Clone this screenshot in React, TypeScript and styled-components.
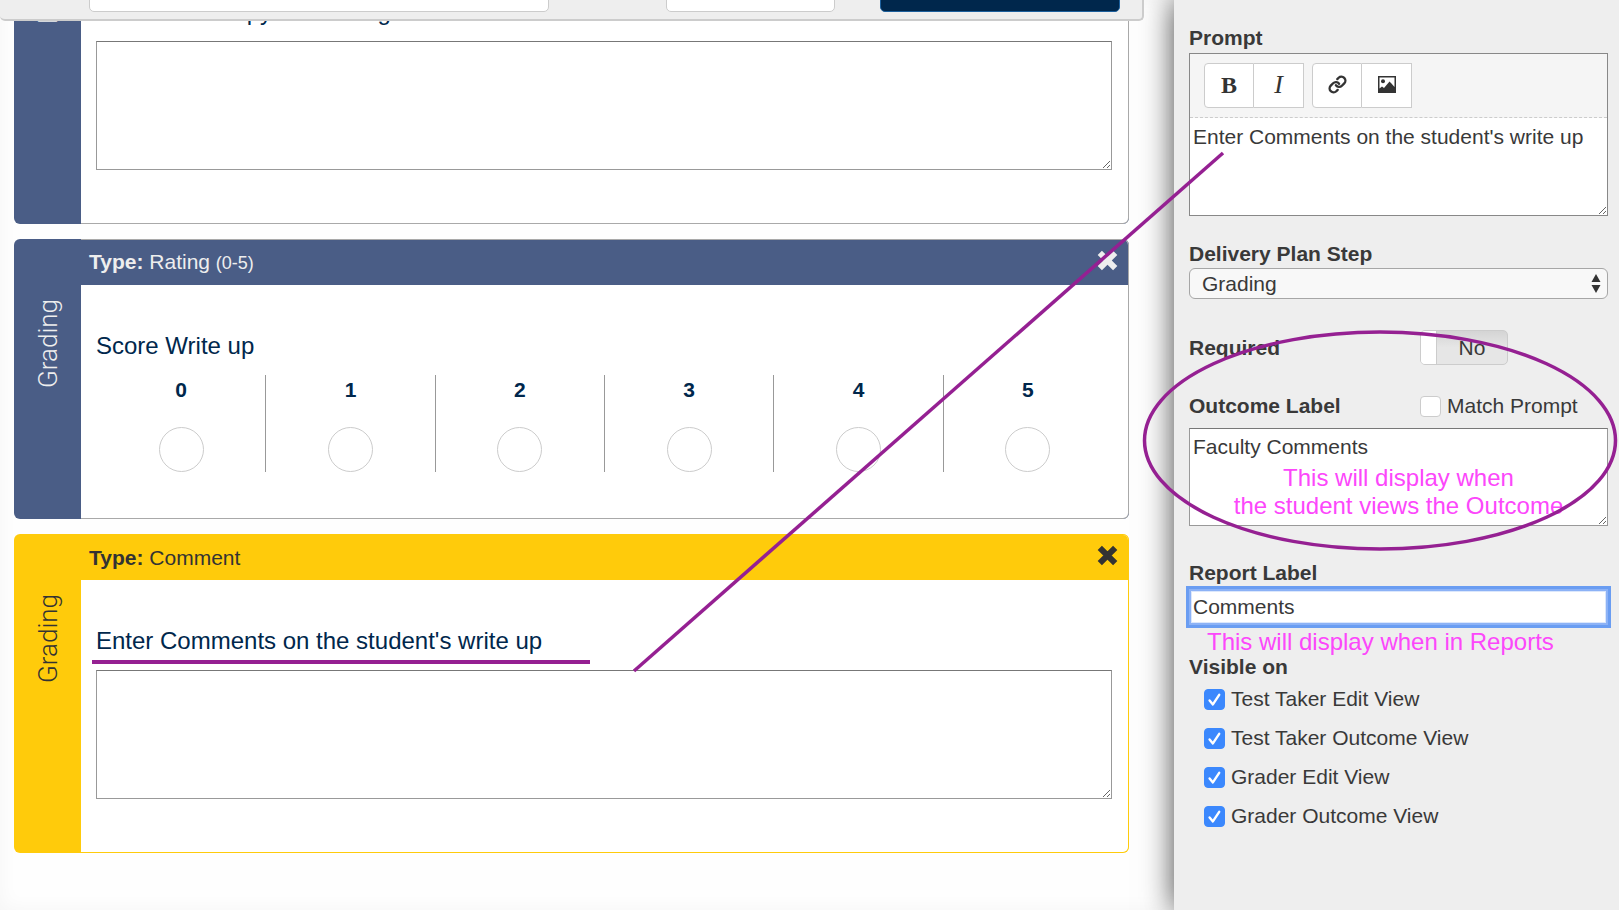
import React from "react";
import styled, { createGlobalStyle, css } from "styled-components";
import { Link } from "lucide-react";

const sans = `"Liberation Sans", Arial, Helvetica, sans-serif`;
const purple = "#952092";

const GlobalStyle = createGlobalStyle`
  *, *::before, *::after { box-sizing: border-box; }
  body { margin: 0; background: #fefefe; color: #393939; font: 21px/24px ${sans}; overflow: hidden; }
  input, textarea, select, button { font: inherit; color: inherit; margin: 0; }
`;

const Page = styled.div`
  position: relative;
  display: grid;
  grid-template-columns: minmax(0, 1fr) 445px;
  min-height: 100vh;
  overflow: hidden;
`;

const Main = styled.main`
  position: relative;
  padding: 0 45px 0 14px;
  box-shadow: inset 0 0 20px rgba(0, 0, 0, 0.04);
`;

/* Floating bar, scrolled most of the way out of view over the cards. */
const TopBar = styled.header`
  position: absolute;
  top: -47px;
  left: 0;
  right: 30px;
  z-index: 1;
  display: flex;
  align-items: flex-end;
  height: 68px;
  padding: 0 22px 7px 89px;
  background: #eee;
  border: solid #ccc;
  border-width: 0 2px 2px 0;
  border-radius: 0 0 5px 5px;
`;

const TopInput = styled.input`
  flex: 0 0 460px;
  height: 44px;
  padding: 0 12px;
  background: #fff;
  border: 1px solid #ccc;
  border-radius: 5px;
`;

const TopSelect = styled.select`
  appearance: none;
  flex: 0 0 169px;
  height: 44px;
  margin-left: 117px;
  padding: 0 12px;
  background: #fff;
  border: 1px solid #ccc;
  border-radius: 5px;
`;

const SaveButton = styled.button`
  flex: 1;
  height: 44px;
  margin-left: 45px;
  background: #00274c;
  color: #fff;
  border: 1px solid #1c5f9c;
  border-radius: 5px;
`;

const Cards = styled.div`
  display: flex;
  flex-direction: column;
  gap: 15px;
  margin-top: -95px;
`;

type Tone = "blue" | "yellow";
const tones = {
  blue: { fill: "#4a5d86", text: "#eee", border: "#a9a9a9" },
  yellow: { fill: "#ffcb0b", text: "#333", border: "#ffcb0b" },
};

const Card = styled.section<{ $tone: Tone }>`
  display: grid;
  grid-template-columns: 67px minmax(0, 1fr);
  background: ${(p) => tones[p.$tone].fill};
  color: ${(p) => tones[p.$tone].text};
  border-radius: 6px;
  overflow: hidden;
`;

/* Rotated half a turn, so its end and bottom padding sit at the top. */
const StepTab = styled.div`
  display: flex;
  align-items: center;
  justify-content: flex-end;
  padding-bottom: 60px;
  writing-mode: vertical-rl;
  transform: rotate(180deg);
  font: 300 26px/36px Roboto, ${sans};
`;

const CardBody = styled.div<{ $tone: Tone }>`
  border: 1px solid ${(p) => tones[p.$tone].border};
  border-left: 0;
  border-radius: 0 6px 6px 0;
  background: #fff;
  overflow: hidden;
`;

const CardHeader = styled.div<{ $tone: Tone }>`
  display: flex;
  align-items: center;
  justify-content: space-between;
  height: 45px;
  padding: 0 10px 0 8px;
  background: ${(p) => tones[p.$tone].fill};
  small { font-size: 18px; }
`;

const CloseButton = styled.button`
  display: flex;
  padding: 0 0 4px;
  border: 0;
  background: none;
`;

const CardContent = styled.div<{ $bottom: number }>`
  padding: 46px 16px ${(p) => p.$bottom}px 15px;
  color: #00274c;
`;

const Question = styled.label`
  display: block;
  font-size: 24px;
  line-height: 30px;
  margin-bottom: 14px;
`;

const boxed = css`
  display: block;
  width: 100%;
  background: #fff;
  border: 1px solid #999;
  border-top-color: #777;
  border-radius: 0;
`;

const Answer = styled.textarea`
  ${boxed}
  height: 129px;
`;

const Scale = styled.fieldset`
  border: 0;
  margin: 0;
  padding: 0;
  legend { padding: 0; font-size: 24px; line-height: 30px; margin-bottom: 14px; }
`;

const ScaleRow = styled.div`
  display: grid;
  grid-template-columns: repeat(6, 1fr);
`;

const ScaleItem = styled.label`
  display: flex;
  flex-direction: column;
  align-items: center;
  justify-content: space-between;
  height: 97px;
  padding-top: 3px;
  font-weight: 700;
  border-left: 1px solid #999;
  &:first-child { border-left-color: transparent; }
`;

const Radio = styled.input`
  appearance: none;
  width: 45px;
  height: 45px;
  border: 1px solid #ccc;
  border-radius: 50%;
  background: #fff;
`;

const Panel = styled.aside`
  position: relative;
  padding: 26px 11px 0 15px;
  background: #eee;
  box-shadow: 0 0 30px rgba(0, 0, 0, 0.7);
`;

const Field = styled.div<{ $gap: number }>`
  position: relative;
  margin-bottom: ${(p) => p.$gap}px;
`;

const Label = styled.label`
  display: block;
  font-weight: 700;
`;

const Editor = styled.div`
  ${boxed}
  margin-top: 3px;
  border-color: #888;
`;

const EditorBar = styled.div`
  display: flex;
  gap: 8px;
  padding: 9px 14px;
  background: #f5f5f5;
  border-bottom: 1px dashed #ccc;
`;

const ButtonGroup = styled.div`
  display: flex;
`;

const EditorButton = styled.button`
  display: flex;
  align-items: center;
  justify-content: center;
  width: 50px;
  height: 45px;
  padding: 0 0 2px;
  background: #fff;
  border: 1px solid #ccc;
  color: #333;
  font: 26px/26px "Liberation Serif", serif;
  &:first-child { border-radius: 4px 0 0 4px; }
  & + & { border-left: 0; }
  b { font: 700 24px/26px "Liberation Serif", serif; }
`;

const EditorText = styled.textarea`
  display: block;
  width: 100%;
  height: 97px;
  padding: 7px 3px;
  background: #fff;
  border: 0;
`;

const SelectWrap = styled.div`
  position: relative;
  margin-top: 2px;
  svg { position: absolute; right: 7px; top: 6px; pointer-events: none; }
`;

const StepSelect = styled.select`
  appearance: none;
  display: block;
  width: 100%;
  height: 31px;
  padding: 0 12px;
  background: #f8f8f8;
  border: 1px solid #a6a6a6;
  border-radius: 6px;
`;

const SplitRow = styled.div`
  display: grid;
  grid-template-columns: 231px 1fr;
  align-items: center;
`;

const Switch = styled.button`
  display: flex;
  width: 88px;
  height: 35px;
  padding: 0;
  border: 1px solid #ccc;
  border-radius: 5px;
  background: linear-gradient(#d4d4d4, #e6e6e6 50%);
  line-height: 33px;
  overflow: hidden;
  &::before { content: ""; width: 16px; height: 33px; background: #fff; border-right: 1px solid #ccc; }
  span { flex: 1; text-align: center; }
`;

const CheckLabel = styled.label`
  display: flex;
  align-items: center;
  gap: 6px;
  white-space: nowrap;
`;

const Check = styled.span`
  position: relative;
  display: flex;
  width: 21px;
  height: 21px;
  input {
    appearance: none;
    width: 21px;
    height: 21px;
    border: 1px solid #ccc;
    border-radius: 4px;
    background: #fff;
  }
  input:checked { background: #3b88fd; border-color: #3b88fd; }
  svg { position: absolute; inset: 0; pointer-events: none; }
`;

const OutcomeText = styled.textarea`
  ${boxed}
  height: 98px;
  margin-top: 10px;
  padding: 6px 3px;
`;

const ReportInput = styled.input`
  ${boxed}
  height: 36px;
  margin-top: 4px;
  padding: 0 3px;
  border: 1px solid #8cb2f6;
  outline: 0;
  box-shadow: 0 0 0 3px #6a9df2, inset 0 0 0 1px #8cb2f6, inset 0 0 0 2px #dbe7fc;
`;

const Note = styled.p`
  position: absolute;
  top: 100%;
  left: 0;
  right: 0;
  margin: 0;
  color: #fc47fb;
  font-size: 24px;
  line-height: 28px;
  text-align: center;
  white-space: nowrap;
  pointer-events: none;
`;

const OutcomeNote = styled(Note)`
  top: 70px;
`;

const ReportNote = styled(Note)`
  padding: 3px 18px;
  text-align: left;
`;

const CheckList = styled.div`
  display: flex;
  flex-direction: column;
  gap: 15px;
  padding: 8px 15px 0;
`;

const Markup = styled.svg`
  position: absolute;
  top: 0;
  left: 0;
  z-index: 2;
  pointer-events: none;
`;

function Checkbox({ label, checked }: { label: string; checked?: boolean }) {
  return (
    <CheckLabel>
      <Check>
        <input type="checkbox" defaultChecked={checked} />
        {checked && (
          <svg width="21" height="21" viewBox="0 0 21 21" fill="none" stroke="#fff" strokeWidth="2.4" strokeLinecap="round" strokeLinejoin="round">
            <path d="M5.6 11.4 L8.9 15.4 L15.2 5.8" />
          </svg>
        )}
      </Check>
      {label}
    </CheckLabel>
  );
}

function PictureIcon() {
  return (
    <svg width="18" height="17" viewBox="0 0 18 17" fill="#333">
      <path fillRule="evenodd" d="M0 0 H18 V17 H0 Z M1.5 1.5 V12.5 L4 10.5 L6 12 L11.5 5.5 L13 7 L16.5 11 V1.5 Z" />
      <circle cx="5" cy="5.3" r="2" />
    </svg>
  );
}

function QuestionCard({ tone, step, type, range, bottom = 53, children }: { tone: Tone; step: string; type: string; range?: string; bottom?: number; children: React.ReactNode }) {
  return (
    <Card $tone={tone}>
      <StepTab>{step}</StepTab>
      <CardBody $tone={tone}>
        <CardHeader $tone={tone}>
          <span>
            <b>Type:</b> {type} {range && <small>{range}</small>}
          </span>
          <CloseButton aria-label="Remove question">
            <svg width="21" height="21" viewBox="0 0 21 21" stroke="currentColor" strokeWidth="6">
              <path d="M2.8 2.8 L18.2 18.2 M18.2 2.8 L2.8 18.2" />
            </svg>
          </CloseButton>
        </CardHeader>
        <CardContent $bottom={bottom}>{children}</CardContent>
      </CardBody>
    </Card>
  );
}

export default function App() {
  return (
    <Page>
      <GlobalStyle />
      <Main>
        <TopBar>
          <TopInput aria-label="Name" />
          <TopSelect aria-label="Status" />
          <SaveButton aria-label="Save" />
        </TopBar>
        <Cards>
          <QuestionCard tone="blue" step="Entry" type="Comment">
            <Question htmlFor="copy">Attach final copy of Grading</Question>
            <Answer id="copy" />
          </QuestionCard>
          <QuestionCard tone="blue" step="Grading" type="Rating" range="(0-5)" bottom={46}>
            <Scale>
              <legend>Score Write up</legend>
              <ScaleRow>
                {[0, 1, 2, 3, 4, 5].map((n) => (
                  <ScaleItem key={n}>
                    {n}
                    <Radio type="radio" name="score" value={n} />
                  </ScaleItem>
                ))}
              </ScaleRow>
            </Scale>
          </QuestionCard>
          <QuestionCard tone="yellow" step="Grading" type="Comment">
            <Question htmlFor="comments">Enter Comments on the student's write up</Question>
            <Answer id="comments" />
          </QuestionCard>
        </Cards>
      </Main>
      <Panel>
        <Field $gap={26}>
          <Label htmlFor="prompt">Prompt</Label>
          <Editor>
            <EditorBar>
              <ButtonGroup>
                <EditorButton aria-label="Bold"><b>B</b></EditorButton>
                <EditorButton aria-label="Italic"><i>I</i></EditorButton>
              </ButtonGroup>
              <ButtonGroup>
                <EditorButton aria-label="Link"><Link size={19} strokeWidth={3} /></EditorButton>
                <EditorButton aria-label="Image"><PictureIcon /></EditorButton>
              </ButtonGroup>
            </EditorBar>
            <EditorText id="prompt" defaultValue="Enter Comments on the student's write up" />
          </Editor>
        </Field>
        <Field $gap={31}>
          <Label htmlFor="step">Delivery Plan Step</Label>
          <SelectWrap>
            <StepSelect id="step">
              <option>Grading</option>
            </StepSelect>
            <svg width="10" height="19" viewBox="0 0 10 19" fill="#333">
              <path d="M5 0 L9.5 8 H0.5 Z M5 19 L9.5 11 H0.5 Z" />
            </svg>
          </SelectWrap>
        </Field>
        <Field $gap={29}>
          <SplitRow>
            <Label as="span" id="required">Required</Label>
            <Switch role="switch" aria-checked="false" aria-labelledby="required"><span>No</span></Switch>
          </SplitRow>
        </Field>
        <Field $gap={35}>
          <SplitRow>
            <Label htmlFor="outcome">Outcome Label</Label>
            <Checkbox label="Match Prompt" />
          </SplitRow>
          <OutcomeText id="outcome" defaultValue="Faculty Comments" />
          <OutcomeNote>This will display when<br />the student views the Outcome</OutcomeNote>
        </Field>
        <Field $gap={30}>
          <Label htmlFor="report">Report Label</Label>
          <ReportInput id="report" defaultValue="Comments" />
          <ReportNote>This will display when in Reports</ReportNote>
        </Field>
        <Label as="div">Visible on</Label>
        <CheckList>
          <Checkbox label="Test Taker Edit View" checked />
          <Checkbox label="Test Taker Outcome View" checked />
          <Checkbox label="Grader Edit View" checked />
          <Checkbox label="Grader Outcome View" checked />
        </CheckList>
      </Panel>
      <Markup width="1619" height="910" fill="none" stroke={purple} strokeWidth="4">
        <path d="M1223 153 L634 671" strokeWidth="3.5" />
        <path d="M92 662 H590" />
        <ellipse cx="1380" cy="440.5" rx="235.5" ry="108.5" strokeWidth="3.5" />
      </Markup>
    </Page>
  );
}
